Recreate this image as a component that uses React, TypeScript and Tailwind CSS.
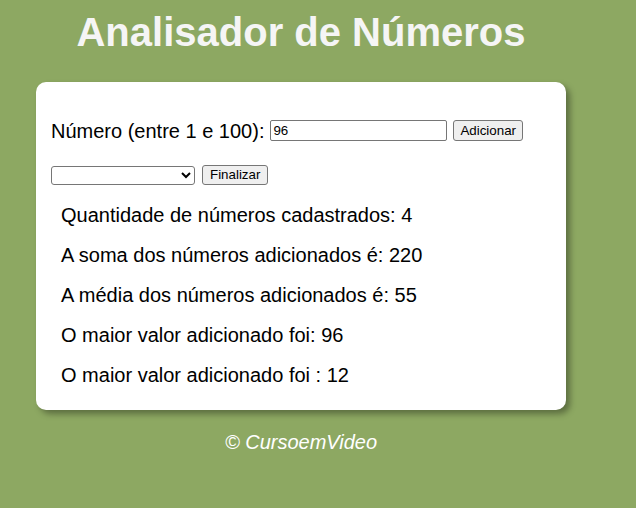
import React from "react";

const RESULTS = [
  "Quantidade de números cadastrados: 4",
  "A soma dos números adicionados é: 220",
  "A média dos números adicionados é: 55",
  "O maior valor adicionado foi: 96",
  "O maior valor adicionado foi : 12",
];

export default function App() {
  return (
    <div className="min-h-[508px] bg-[#8da862] font-['Liberation_Sans',Arial,sans-serif] text-black">
      <div className="ml-[36px] w-[530px]">
        <h1 className="pt-[10px] text-center text-[40px] font-bold leading-[44px] text-[#f5f5f5]">
          Analisador de Números
        </h1>

        {/* caixa principal */}
        <div className="mt-[28px] rounded-[10px] bg-white pl-[15px] pt-[38px] pb-[15px] shadow-[4px_4px_6px_rgba(0,0,0,0.35)]">
          <div className="flex h-[21px] items-center text-[20px]">
            <span>Número (entre 1 e 100):</span>
            <input
              type="text"
              defaultValue="96"
              className="ml-[6px] h-[21px] w-[177px] rounded-[2px] border border-[#767676] bg-white px-[2px] text-[13.33px] outline-none"
            />
            <button className="ml-[6px] h-[21px] rounded-[3px] border border-[#767676] bg-[#efefef] px-[6px] text-[13.33px] leading-none">
              Adicionar
            </button>
          </div>

          <div className="mt-[24px] flex h-[20px] items-center">
            <select className="h-[19px] w-[144px] rounded-[3px] border border-[#767676] bg-white text-[13.33px]">
              <option></option>
            </select>
            <button className="ml-[7px] h-[20px] rounded-[3px] border border-[#767676] bg-[#efefef] px-[7px] text-[13.33px] leading-none">
              Finalizar
            </button>
          </div>

          <div className="mt-[10px] pl-[10px]">
            {RESULTS.map((r) => (
              <p key={r} className="h-[40px] text-[20px] leading-[40px]">
                {r}
              </p>
            ))}
          </div>
        </div>

        <p className="mt-[17px] text-center text-[20px] italic text-white">© CursoemVideo</p>
      </div>
    </div>
  );
}
